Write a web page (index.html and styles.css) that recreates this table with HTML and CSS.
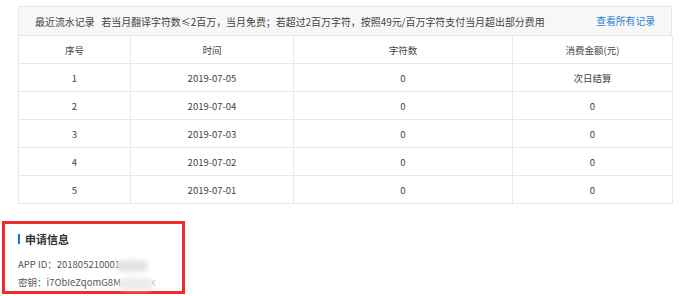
FILE: index.html
```html
<!DOCTYPE html>
<html lang="zh-CN">
<head>
<meta charset="utf-8">
<title>流水记录</title>
<link rel="stylesheet" href="styles.css">
</head>
<body>
<div class="records">
  <div class="caption">
    <span class="caption-text">最近流水记录&nbsp;&nbsp;&nbsp;若当月翻译字符数≤2百万，当月免费；若超过2百万字符，按照49元/百万字符支付当月超出部分费用</span>
    <a class="caption-link" href="#">查看所有记录</a>
  </div>
  <table class="grid">
    <colgroup>
      <col class="c1"><col class="c2"><col class="c3"><col class="c4">
    </colgroup>
    <thead>
      <tr><th>序号</th><th>时间</th><th>字符数</th><th>消费金额(元)</th></tr>
    </thead>
    <tbody>
      <tr><td>1</td><td>2019-07-05</td><td>0</td><td>次日结算</td></tr>
      <tr><td>2</td><td>2019-07-04</td><td>0</td><td>0</td></tr>
      <tr><td>3</td><td>2019-07-03</td><td>0</td><td>0</td></tr>
      <tr><td>4</td><td>2019-07-02</td><td>0</td><td>0</td></tr>
      <tr><td>5</td><td>2019-07-01</td><td>0</td><td>0</td></tr>
    </tbody>
  </table>
</div>

<div class="apply">
  <div class="apply-title"><span class="bar"></span>申请信息</div>
  <div class="apply-line">APP ID：<span class="masked">201805210001<span class="smudge s1"></span></span></div>
  <div class="apply-line">密钥：<span class="masked">i7ObIeZqomG8M<span class="ghost">x</span><span class="smudge s2"></span></span></div>
</div>
</body>
</html>
```

FILE: styles.css
```css
html, body {
  margin: 0;
  padding: 0;
  background: #ffffff;
}

body {
  font-family: "Noto Sans CJK SC", "Noto Sans", sans-serif;
  font-size: 9.5px;
  color: #4a4a4a;
}

.records {
  margin: 6px 0 0 18px;
  width: 654px;
}

.caption {
  box-sizing: border-box;
  height: 29px;
  border: 1px solid #e8e8e8;
  border-bottom: none;
  background: #f7f7f7;
  display: flex;
  align-items: center;
  justify-content: space-between;
  padding: 0 16px 0 16px;
}

.caption-text {
  color: #444444;
  font-size: 9.95px;
}

.caption-link {
  color: #2a7fd4;
  text-decoration: none;
  font-size: 9.8px;
}

.grid {
  width: 654px;
  border-collapse: collapse;
  table-layout: fixed;
}

.c1 { width: 112px; }
.c2 { width: 163px; }
.c3 { width: 219px; }
.c4 { width: 160px; }

.grid th,
.grid td {
  border: 1px solid #e8e8e8;
  height: 27px;
  padding: 0;
  text-align: center;
  font-weight: normal;
  color: #444444;
  background: #ffffff;
}

.apply {
  box-sizing: border-box;
  margin: 17px 0 0 2px;
  width: 183px;
  height: 73px;
  border: 3px solid #ef2b2b;
  padding: 7px 0 0 13px;
  background: #ffffff;
}

.apply-title {
  display: flex;
  align-items: center;
  height: 16px;
  font-size: 11px;
  font-weight: bold;
  color: #333333;
  margin-bottom: 8px;
}

.bar {
  display: inline-block;
  width: 2px;
  height: 10px;
  background: #1f6fd1;
  margin-right: 5px;
}

.apply-line {
  height: 18px;
  line-height: 18px;
  color: #555555;
  white-space: nowrap;
}

.masked {
  position: relative;
}

.ghost {
  color: #c4c4c4;
  margin-left: 30px;
}

.smudge {
  position: absolute;
  top: 3px;
  height: 12px;
  background: #e4e4e4;
  border-radius: 6px;
  filter: blur(2px);
}

.s1 {
  left: 59px;
  width: 32px;
}

.s2 {
  left: 72px;
  width: 34px;
  background: #ebebeb;
}
```
